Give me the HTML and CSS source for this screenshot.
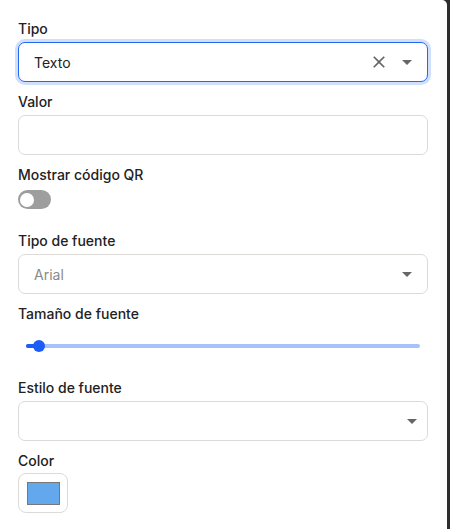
FILE: index.html
```html
<!DOCTYPE html>
<html lang="es">
<head>
  <meta charset="UTF-8" />
  <meta name="viewport" content="width=device-width, initial-scale=1.0"/>
  <title>Propiedades</title>
  <link rel="stylesheet" href="styles.css">
</head>
<body>
  <div class="panel">
    <div class="field">
      <label class="label">Tipo</label>
      <div class="select focused">
        <span class="value">Texto</span>
        <svg class="clear" viewBox="0 0 24 24"><path d="M19 6.41 17.59 5 12 10.59 6.41 5 5 6.41 10.59 12 5 17.59 6.41 19 12 13.41 17.59 19 19 17.59 13.41 12z"/></svg>
        <svg class="arrow" viewBox="0 0 24 24"><path d="M7 10l5 5 5-5z"/></svg>
      </div>
    </div>

    <div class="field">
      <label class="label">Valor</label>
      <div class="input"></div>
    </div>

    <div class="field">
      <label class="label">Mostrar código QR</label>
      <div class="switch-row">
        <div class="switch"><span class="knob"></span></div>
      </div>
    </div>

    <div class="field">
      <label class="label">Tipo de fuente</label>
      <div class="select">
        <span class="value placeholder">Arial</span>
        <svg class="arrow" viewBox="0 0 24 24"><path d="M7 10l5 5 5-5z"/></svg>
      </div>
    </div>

    <div class="field">
      <label class="label">Tamaño de fuente</label>
      <div class="slider">
        <div class="rail">
          <div class="track"></div>
          <span class="thumb"></span>
        </div>
      </div>
    </div>

    <div class="field">
      <label class="label">Estilo de fuente</label>
      <div class="select empty">
        <span class="value"></span>
        <svg class="arrow" viewBox="0 0 24 24"><path d="M7 10l5 5 5-5z"/></svg>
      </div>
    </div>

    <div class="field">
      <label class="label tight">Color</label>
      <div class="color-btn"><span class="swatch"></span></div>
    </div>
  </div>
</body>
</html>
```

FILE: styles.css
```css
* {
  box-sizing: border-box;
}

body {
  margin: 0;
  background: #2d2d2d;
  font-family: 'Inter', 'Noto Sans', sans-serif;
  color: #222;
  height: 100vh;
  overflow: hidden;
}

.panel {
  width: 447px;
  height: 100%;
  background: #fff;
  border-top-right-radius: 5px;
  padding: 20px 19px 0 18px;
  display: flex;
  flex-direction: column;
  gap: 11px;
}

.field {
  display: flex;
  flex-direction: column;
}

.label {
  font-size: 14px;
  line-height: 18px;
  font-weight: 500;
  color: #222;
  margin-bottom: 4px;
}

.label.tight {
  margin-bottom: 3px;
}

.select,
.input {
  height: 40px;
  border: 1px solid #dcdad6;
  border-radius: 7px;
  background: #fff;
}

.select {
  display: flex;
  align-items: center;
  padding: 0 8px 0 15px;
}

.select.empty {
  padding-right: 3px;
}

.select.focused {
  border-color: #2468f2;
  box-shadow: 0 0 0 3px #cfdffc;
}

.value {
  flex: 1;
  font-size: 14px;
  color: #222;
}

.value.placeholder {
  color: #8a8a8a;
}

.select svg {
  fill: #666;
  flex: none;
}

.clear {
  width: 20px;
  height: 20px;
  margin-right: 6px;
}

.arrow {
  width: 24px;
  height: 24px;
}

.switch-row {
  padding: 2px 0 12px;
}

.switch {
  width: 33px;
  height: 19px;
  border-radius: 10px;
  background: #9e9e9e;
  display: flex;
  align-items: center;
  padding: 0 2px;
}

.knob {
  width: 14px;
  height: 14px;
  border-radius: 50%;
  background: #fff;
}

.slider {
  height: 41px;
  padding: 0 8px 3px;
  display: flex;
  align-items: center;
}

.rail {
  position: relative;
  flex: 1;
  height: 4px;
  border-radius: 2px;
  background: #a7c2fa;
}

.track {
  width: 13px;
  height: 100%;
  border-radius: 2px;
  background: #1d5cf5;
}

.thumb {
  position: absolute;
  left: 7px;
  top: -4px;
  width: 12px;
  height: 12px;
  border-radius: 50%;
  background: #1d5cf5;
}

.color-btn {
  width: 50px;
  height: 40px;
  border: 1px solid #dcdad6;
  border-radius: 8px;
  display: flex;
  align-items: center;
  justify-content: center;
}

.swatch {
  width: 33px;
  height: 23px;
  background: #63a8ec;
  border: 1px solid #777;
}
```
